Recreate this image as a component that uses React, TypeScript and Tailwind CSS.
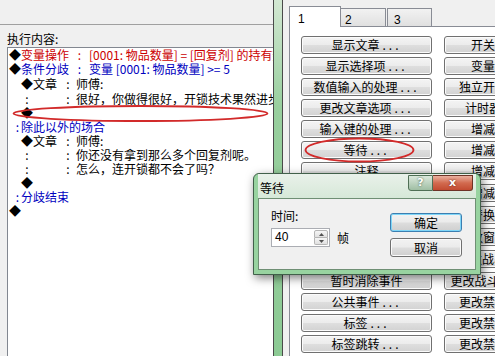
import type { ReactNode } from "react";

const leftButtons = [
  "显示文章...",
  "显示选择项...",
  "数值输入的处理...",
  "更改文章选项...",
  "输入键的处理...",
  "等待...",
  "注释",
  "条件分歧...",
  "循环",
  "中断循环",
  "中断事件处理",
  "暂时消除事件",
  "公共事件...",
  "标签...",
  "标签跳转...",
];

const rightButtons = [
  "开关操作...",
  "变量操作...",
  "独立开关操作...",
  "计时器操作...",
  "增减金钱...",
  "增减物品...",
  "增减武器...",
  "增减防具...",
  "替换角色...",
  "更改窗口外观...",
  "更改战斗BGM...",
  "更改战斗结束ME...",
  "更改禁止存档...",
  "更改禁止菜单...",
  "更改禁止遇敌...",
];

// rows 7-11 sit a little further apart in the shot
function rowGap(i: number) {
  if (i === 0) return "";
  if (i >= 7 && i <= 11) return "mt-[4px]";
  return "mt-[3px]";
}

function CmdButton({ label, className }: { label: string; className: string }) {
  const dots = label.endsWith("...");
  const name = dots ? label.slice(0, -3) : label;
  return (
    <div
      className={`h-[18px] shrink-0 rounded-[3px] border border-[#707070] bg-[linear-gradient(to_bottom,#f4f4f4_0%,#ececec_48%,#dedede_52%,#d2d2d2_100%)] shadow-[inset_0_0_0_1px_#fbfbfb] flex items-center justify-center whitespace-nowrap overflow-hidden text-[12px] leading-[14px] text-black ${className}`}
    >
      {name}
      {dots && <span className="ml-[3px] tracking-[3px]">...</span>}
    </div>
  );
}

function Line({ h, children }: { h: string; children: ReactNode }) {
  return (
    <div className={`flex items-center whitespace-nowrap text-[12px] leading-[14px] ${h}`}>
      {children}
    </div>
  );
}

function Top({ name, params, color }: { name: string; params: string; color: string }) {
  return (
    <>
      <span className="w-[13px] shrink-0 text-right text-black">◆</span>
      <span className={`w-[49px] shrink-0 ${color}`}>{name}</span>
      <span className={`w-[19px] shrink-0 text-center ${color}`}>:</span>
      <span className={color}>{params}</span>
    </>
  );
}

function Sub({ mark, name, text }: { mark: string; name?: string; text?: string }) {
  return (
    <>
      <span className="w-[13px] shrink-0" />
      <span className="w-[12px] shrink-0 text-center text-black">{mark}</span>
      {text !== undefined && (
        <>
          <span className="w-[30px] shrink-0 text-black">{name}</span>
          <span className="w-[10px] shrink-0 text-center text-black">:</span>
          <span className="ml-[3px] text-black">{text}</span>
        </>
      )}
    </>
  );
}

function Branch({ text }: { text: string }) {
  return (
    <>
      <span className="w-[13px] shrink-0 pr-[2px] text-right text-[#0000c0]">:</span>
      <span className="text-[#0000c0]">{text}</span>
    </>
  );
}

export default function App() {
  return (
    <div className="relative flex h-[356px] w-[495px] overflow-hidden bg-[#f0f0f0] font-['Noto_Sans_CJK_SC',sans-serif] text-black">
      {/* left: event contents */}
      <div className="flex w-[273px] shrink-0 flex-col overflow-hidden">
        <div className="h-[25px] shrink-0 border-b border-[#a0a0a0]" />
        <div className="ml-[7px] mt-[7px] h-[14px] text-[12px] leading-[14px]">执行内容:</div>
        <div className="ml-[7px] mt-[1px] flex-1 w-[300px] border-l border-t border-[#828790] bg-white">
          <Line h="h-[13px]">
            <Top name="变量操作" params="[0001: 物品数量] = [回复剂] 的持有数" color="text-[#cc0000]" />
          </Line>
          <Line h="h-[15px]">
            <Top name="条件分歧" params="变量 [0001: 物品数量] >= 5" color="text-[#0000c0]" />
          </Line>
          <Line h="h-[15px]">
            <Sub mark="◆" name="文章" text="师傅:" />
          </Line>
          <Line h="h-[15px]">
            <Sub mark=":" name="" text="很好，你做得很好，开锁技术果然进步了！" />
          </Line>
          <Line h="h-[14px]">
            <Sub mark="◆" />
          </Line>
          <Line h="h-[14px]">
            <Branch text="除此以外的场合" />
          </Line>
          <Line h="h-[14px]">
            <Sub mark="◆" name="文章" text="师傅:" />
          </Line>
          <Line h="h-[14px]">
            <Sub mark=":" name="" text="你还没有拿到那么多个回复剂呢。" />
          </Line>
          <Line h="h-[14px]">
            <Sub mark=":" name="" text="怎么，连开锁都不会了吗？" />
          </Line>
          <Line h="h-[14px]">
            <Sub mark="◆" />
          </Line>
          <Line h="h-[14px]">
            <Branch text="分歧结束" />
          </Line>
          <Line h="h-[14px]">
            <span className="w-[13px] shrink-0 text-right">◆</span>
          </Line>
        </div>
      </div>

      {/* splitter */}
      <div className="w-[10px] shrink-0 border-l border-r border-[#4a4a4a] bg-[linear-gradient(to_bottom,#d3e8d3_0%,#98cf9e_30%,#8cca94_100%)]" />

      {/* right: command tabs */}
      <div className="flex flex-1 flex-col pl-[6px]">
        <div className="flex h-[26px] shrink-0 items-end font-['Liberation_Sans',sans-serif] text-[12px]">
          <div className="relative z-10 -mb-px h-[21px] w-[52px] border-l border-r border-t border-[#898c95] bg-white pl-[8px] pt-[3px]">
            1
          </div>
          <div className="h-[18px] w-[45px] border-r border-t border-[#898c95] bg-[linear-gradient(to_bottom,#f2f2f2,#e0e0e0)] pl-[4px] pt-[2px]">
            2
          </div>
          <div className="ml-[1px] h-[18px] w-[45px] border-l border-r border-t border-[#898c95] bg-[linear-gradient(to_bottom,#f2f2f2,#e0e0e0)] pl-[6px] pt-[2px]">
            3
          </div>
        </div>
        <div className="flex flex-1 gap-[12px] border-l border-t border-[#898c95] bg-white pl-[11px] pt-[9px]">
          <div className="flex w-[131px] shrink-0 flex-col">
            {leftButtons.map((b, i) => (
              <CmdButton key={b} label={b} className={rowGap(i)} />
            ))}
          </div>
          <div className="flex w-[124px] shrink-0 flex-col">
            {rightButtons.map((b, i) => (
              <CmdButton key={b} label={b} className={rowGap(i)} />
            ))}
          </div>
        </div>
      </div>

      {/* red hand-drawn marks */}
      <svg className="pointer-events-none absolute left-0 top-0" width="495" height="356">
        <ellipse cx="140.5" cy="113.5" rx="127" ry="7.5" fill="none" stroke="#d22a2a" strokeWidth="1.8" />
        <ellipse cx="359.5" cy="150" rx="54" ry="11.5" fill="none" stroke="#d22a2a" strokeWidth="1.8" />
      </svg>

      {/* wait dialog */}
      <div className="absolute left-[253px] top-[173px] flex h-[102px] w-[228px] flex-col rounded-t-[6px] border border-[#41604a] bg-[#98d3a0] px-[4px] pb-[4px] shadow-[2px_3px_10px_rgba(0,0,0,0.5)]">
        <div className="flex h-[24px] shrink-0 bg-[linear-gradient(to_bottom,#e9f1ea,#d6e8d8)]">
          <span className="ml-[2px] mt-[7px] text-[12px] leading-[14px]">等待</span>
          <div className="ml-auto mr-[3px] mt-[1px] flex h-[16px]">
            <div className="flex w-[25px] items-center justify-center rounded-bl-[3px] border border-[#4f6f55] bg-[linear-gradient(to_bottom,#dbe8dc,#9fbea3)] font-['DejaVu_Sans',sans-serif] text-[11px] font-bold text-white [text-shadow:0_0_2px_#2d4a33]">
              ?
            </div>
            <div className="flex w-[40px] items-center justify-center rounded-br-[3px] border border-l-0 border-[#6d3326] bg-[linear-gradient(to_bottom,#eab1a0,#d26a4f_50%,#c24b31)] font-['DejaVu_Sans',sans-serif] text-[11px] font-bold text-white [text-shadow:0_0_2px_#5a1a0e]">
              x
            </div>
          </div>
        </div>
        <div className="flex flex-1 justify-between border border-[#6f8f74] bg-[#f0f0f0] pl-[12px] pr-[13px]">
          <div className="flex flex-col">
            <div className="mt-[10px] h-[14px] text-[12px] leading-[14px]">时间:</div>
            <div className="mt-[5px] flex items-center">
              <div className="flex h-[19px] w-[59px] border border-[#abadb3] bg-white">
                <span className="flex-1 pl-[3px] font-['Liberation_Sans',sans-serif] text-[12px] leading-[17px]">40</span>
                <div className="my-px mr-px flex w-[14px] flex-col">
                  <div className="flex flex-1 items-center justify-center rounded-t-[2px] border border-[#b5b5b5] bg-[linear-gradient(to_bottom,#f6f6f6,#e0e0e0)]">
                    <svg width="5" height="3" viewBox="0 0 5 3">
                      <path d="M0 3L2.5 0L5 3Z" fill="#505050" />
                    </svg>
                  </div>
                  <div className="flex flex-1 items-center justify-center rounded-b-[2px] border border-t-0 border-[#b5b5b5] bg-[linear-gradient(to_bottom,#f6f6f6,#e0e0e0)]">
                    <svg width="5" height="3" viewBox="0 0 5 3">
                      <path d="M0 0L2.5 3L5 0Z" fill="#505050" />
                    </svg>
                  </div>
                </div>
              </div>
              <span className="ml-[7px] text-[12px] leading-[14px]">帧</span>
            </div>
          </div>
          <div className="flex flex-col">
            <div className="mt-[14px] flex h-[19px] w-[72px] items-center justify-center rounded-[3px] border border-[#3c7fb1] bg-[linear-gradient(to_bottom,#f2f2f2_0%,#ebebeb_48%,#dddddd_52%,#cfcfcf_100%)] text-[12px] shadow-[inset_0_0_0_1px_#7fd6f8]">
              确定
            </div>
            <div className="mt-[6px] flex h-[19px] w-[72px] items-center justify-center rounded-[3px] border border-[#707070] bg-[linear-gradient(to_bottom,#f2f2f2_0%,#ebebeb_48%,#dddddd_52%,#cfcfcf_100%)] text-[12px] shadow-[inset_0_0_0_1px_#fbfbfb]">
              取消
            </div>
          </div>
        </div>
      </div>
    </div>
  );
}
